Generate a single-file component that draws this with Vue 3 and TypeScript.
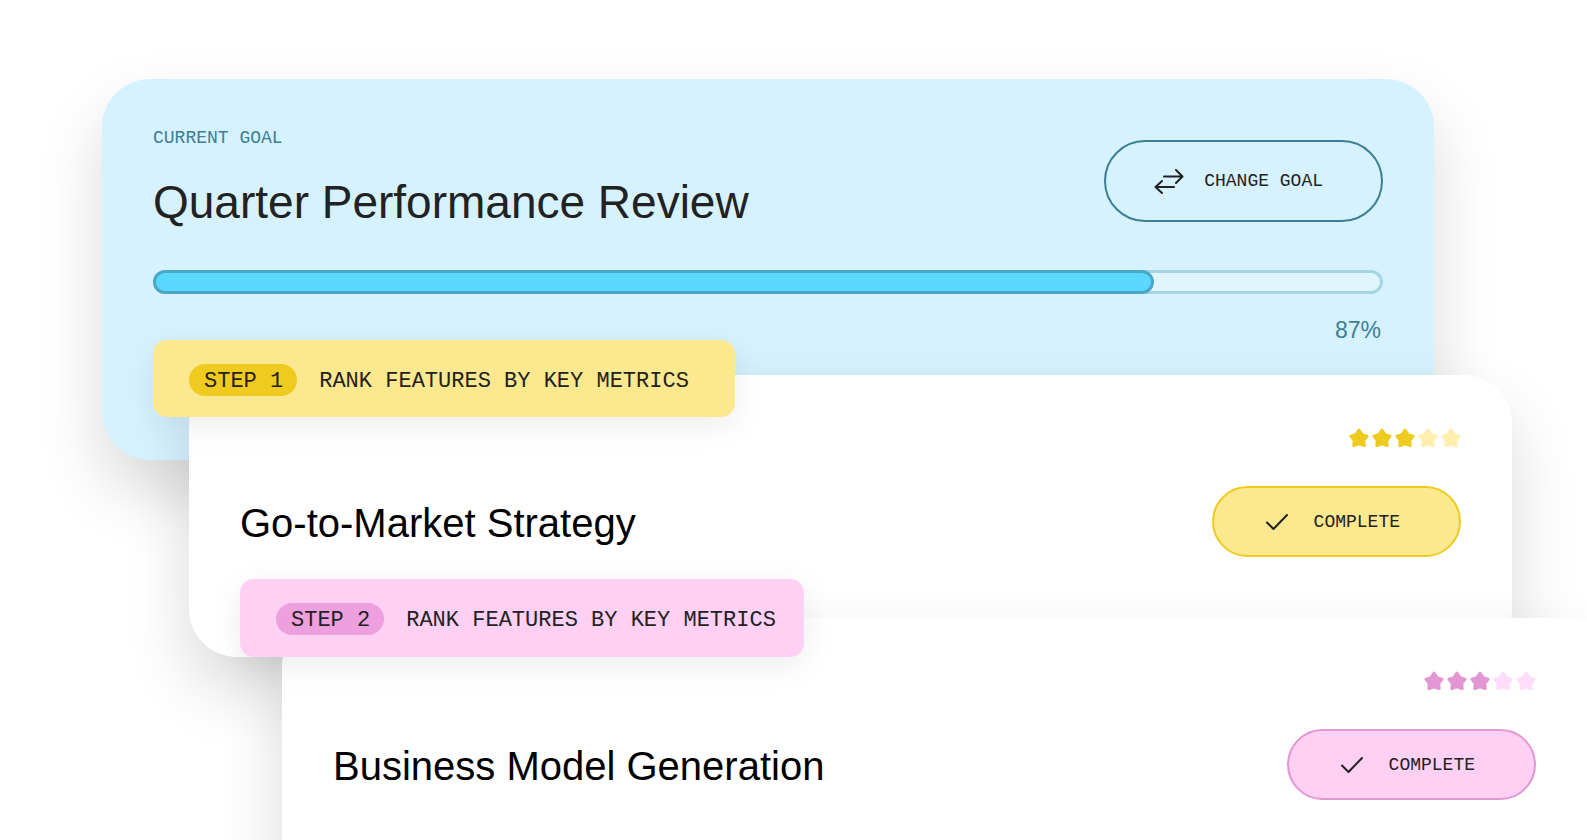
<script setup lang="ts">
interface Step {
  id: string
  badge: string
  task: string
  title: string
  rating: number
}

const goal = { label: 'Current goal', title: 'Quarter Performance Review', percent: '87%', fill: 81.4 }

const steps: Step[] = [
  { id: 'gold', badge: 'Step 1', task: 'Rank features by key metrics', title: 'Go-to-Market Strategy', rating: 3 },
  { id: 'pink', badge: 'Step 2', task: 'Rank features by key metrics', title: 'Business Model Generation', rating: 3 },
]
</script>

<template>
  <main class="board">
    <section class="goal">
      <header class="goal-head">
        <div class="goal-text">
          <p class="goal-label">{{ goal.label }}</p>
          <h1 class="goal-title">{{ goal.title }}</h1>
        </div>
        <button type="button" class="pill-button change">
          <svg class="swap" viewBox="0 0 30 26" aria-hidden="true">
            <path d="M10 8.500H28M22 2L28.500 8.500L22 15M20 19H2M8 13L1.500 19L8 25" />
          </svg>
          <span>Change goal</span>
        </button>
      </header>
      <div class="track" role="progressbar" aria-label="Goal progress" aria-valuenow="87" aria-valuemin="0" aria-valuemax="100">
        <div class="fill" :style="{ width: goal.fill + '%' }"></div>
      </div>
      <p class="percent">{{ goal.percent }}</p>
    </section>

    <section v-for="step in steps" :key="step.id" class="step" :class="step.id">
      <div class="banner">
        <span class="badge">{{ step.badge }}</span>
        <span class="task">{{ step.task }}</span>
      </div>
      <h2 class="step-title">{{ step.title }}</h2>
      <div class="side">
        <div class="stars" role="img" :aria-label="step.rating + ' of 5 stars'">
          <svg v-for="n in 5" :key="n" class="star" :class="{ off: n > step.rating }" viewBox="0 0 20 20" aria-hidden="true">
            <path d="M10 2.200L13 6.600L18 8.200L14.800 12.200L15.200 17.600L10 15.900L4.800 17.600L5.200 12.200L2 8.200L7 6.600Z" />
          </svg>
        </div>
        <button type="button" class="pill-button complete">
          <svg class="check" viewBox="0 0 24 18" aria-hidden="true">
            <path d="M2 9.500L8.500 16L22 2" />
          </svg>
          <span>Complete</span>
        </button>
      </div>
    </section>
  </main>
</template>

<style>
body {
  margin: 0;
  background: #fff;
}
</style>

<style scoped>
.board {
  box-sizing: border-box;
  height: 100vh;
  padding-top: 79px;
  overflow: hidden;
  background: #fff;
  color: #222;
  font-family: "Liberation Sans", Arial, sans-serif;
}

p,
h1,
h2 {
  margin: 0;
  font-weight: 400;
}

.goal,
.step {
  position: relative;
  box-sizing: border-box;
  border-radius: 48px;
  box-shadow: 0 32px 64px rgba(0, 0, 0, 0.15);
}

.goal {
  min-height: 381px;
  margin: 0 153px 0 102px;
  padding: 47px 51px;
  background: #d6f2ff;
}

.goal-head {
  display: flex;
  justify-content: space-between;
  align-items: flex-end;
}

.goal-label,
.pill-button,
.banner {
  font-family: "Liberation Mono", "Courier New", monospace;
  text-transform: uppercase;
  white-space: nowrap;
}

.goal-label {
  font-size: 18px;
  line-height: 24px;
  color: #3d7f93;
}

.goal-title {
  margin-top: 24px;
  font-size: 46px;
  line-height: 56px;
}

.pill-button {
  display: flex;
  align-items: center;
  box-sizing: border-box;
  border: 2px solid;
  border-radius: 42px;
  color: #222;
  font-size: 18px;
  line-height: 24px;
}

.pill-button svg {
  fill: none;
  stroke: currentColor;
  stroke-width: 2;
  stroke-linecap: round;
  stroke-linejoin: round;
}

.change {
  height: 82px;
  margin-bottom: 8px;
  padding: 0 58px 0 48px;
  gap: 20px;
  border-color: #3d7f93;
  background: transparent;
}

.swap {
  width: 30px;
  height: 26px;
}

.track {
  box-sizing: border-box;
  height: 24px;
  margin-top: 40px;
  border-radius: 12px;
  background: #dff6ff;
  box-shadow: inset 0 0 0 3px #a5d5e3;
}

.fill {
  box-sizing: border-box;
  height: 24px;
  border: 3px solid #4aa8c7;
  border-radius: 12px;
  background: #5ad8ff;
}

.percent {
  margin-top: 20px;
  padding-right: 2px;
  font-size: 23px;
  line-height: 32px;
  text-align: right;
  color: #3d7f93;
}

.step {
  display: flex;
  justify-content: space-between;
  align-items: flex-end;
  padding: 53px 51px 100px;
  background: #fff;
}

.gold {
  --soft: #fce88f;
  --strong: #efcb20;
  --line: #efcb20;
  --faint: #ffeead;
  margin: -85px 75px 0 189px;
}

.pink {
  --soft: #fed0f4;
  --strong: #ed9fde;
  --line: #e396d4;
  --faint: #ffdcf8;
  margin: -39px 0 0 282px;
  border-radius: 48px 0 0 48px;
}

.banner {
  position: absolute;
  top: -35px;
  left: -36px;
  display: flex;
  align-items: center;
  box-sizing: border-box;
  height: 77px;
  padding: 2px 46px 0 36px;
  gap: 22px;
  border-radius: 14px;
  background: var(--soft);
  box-shadow: 0 8px 32px rgba(0, 0, 0, 0.08);
  font-size: 22px;
  line-height: 28px;
}

.pink .banner {
  top: -39px;
  left: -42px;
  height: 78px;
  padding-right: 28px;
}

.badge,
.task {
  padding-top: 4px;
}

.badge {
  padding-right: 14px;
  padding-left: 15px;
  border-radius: 16px;
  background: var(--strong);
}

.step-title {
  font-size: 40px;
  line-height: 68px;
  color: #000;
}

.side {
  display: flex;
  flex-direction: column;
  align-items: flex-end;
  gap: 38px;
}

.stars {
  display: flex;
  gap: 3px;
}

.star {
  width: 20px;
  height: 20px;
  fill: var(--line);
  stroke: var(--line);
  stroke-width: 3;
  stroke-linejoin: round;
}

.star.off {
  fill: var(--faint);
  stroke: var(--faint);
}

.complete {
  height: 71px;
  padding: 0 59px 0 51px;
  gap: 25px;
  border-color: var(--line);
  background: var(--soft);
}

.check {
  width: 24px;
  height: 18px;
}
</style>
